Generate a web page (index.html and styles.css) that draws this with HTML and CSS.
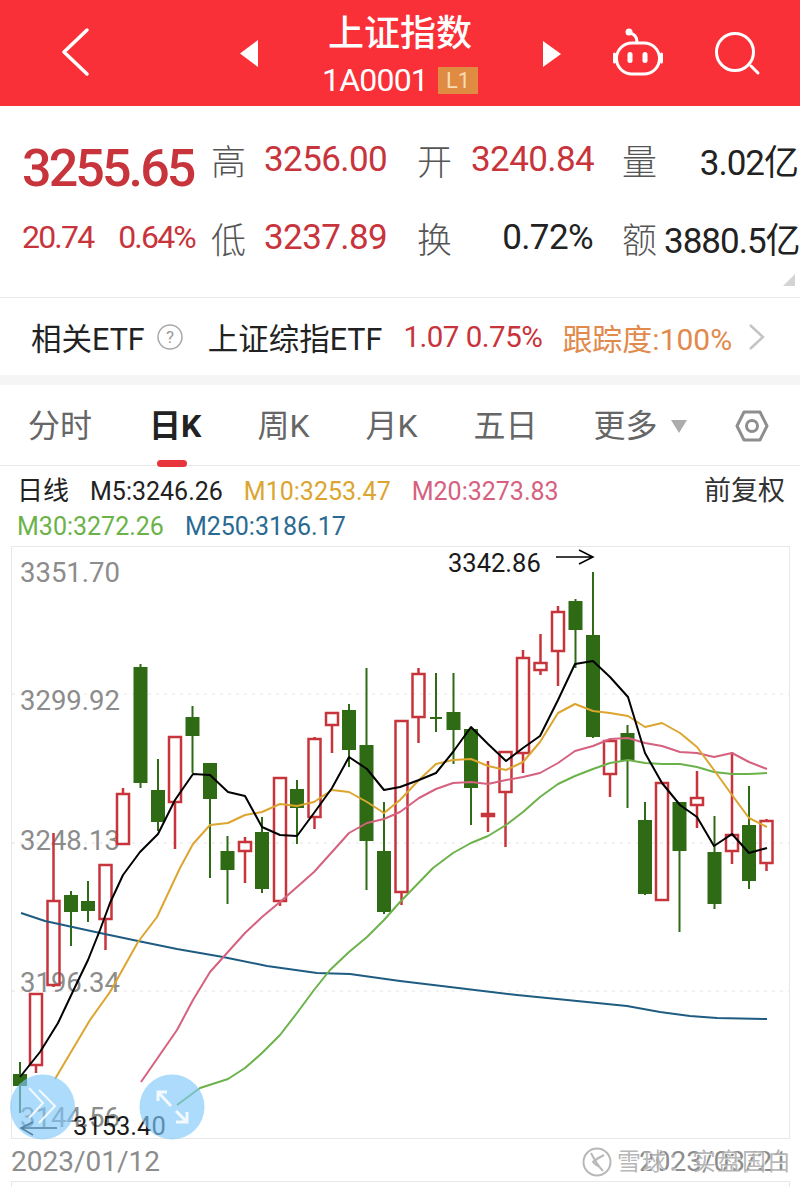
FILE: index.html
```html
<!DOCTYPE html>
<html lang="zh-CN">
<head>
  <meta charset="UTF-8">
  <title>上证指数</title>
  <link rel="stylesheet" href="styles.css">
</head>
<body>
  <header class="topbar">
    <svg class="topbar-icons" viewBox="0 0 800 106" width="800" height="106">
      <path class="icon-line" d="M87 30 64 52 87 74"/>
      <path class="icon-fill" d="M258 40v27l-18-13.500z"/>
      <path class="icon-fill" d="M543 41v26l18-13z"/>
      <!-- robot -->
      <rect class="icon-line robot" x="616.500" y="43" width="43" height="31" rx="15.500"/>
      <path class="icon-line robot" d="M614.500 54v8M661.500 54v8M637 42c0-6-3-8-7-9"/>
      <circle class="icon-fill" cx="629" cy="32" r="3.500"/>
      <rect class="icon-fill" x="627.500" y="52" width="5" height="11" rx="2.500"/>
      <rect class="icon-fill" x="642.500" y="52" width="5" height="11" rx="2.500"/>
      <!-- search -->
      <circle class="icon-line robot" cx="735" cy="52" r="18.500"/>
      <path class="icon-line robot" d="M751 66l7 7"/>
    </svg>
    <div class="title">上证指数</div>
    <div class="subtitle">
      <span class="code">1A0001</span>
      <span class="level">L1</span>
    </div>
  </header>

  <section class="quote">
    <div class="price">3255.65</div>
    <div class="label">高</div>
    <div class="num red">3256.00</div>
    <div class="label">开</div>
    <div class="num red">3240.84</div>
    <div class="label">量</div>
    <div class="num right">3.02亿</div>

    <div class="change"><span>20.74</span><span>0.64%</span></div>
    <div class="label">低</div>
    <div class="num red">3237.89</div>
    <div class="label">换</div>
    <div class="num">0.72%</div>
    <div class="label">额</div>
    <div class="num right">3880.5亿</div>
    <span class="corner"></span>
  </section>

  <section class="etf">
    <span>相关ETF</span>
    <svg class="help" viewBox="0 0 26 26" width="26" height="26">
      <circle cx="13" cy="13" r="12"/>
      <text x="13" y="19" text-anchor="middle">?</text>
    </svg>
    <span class="etf-name">上证综指ETF</span>
    <span class="etf-change">1.07 0.75%</span>
    <span class="etf-track">跟踪度:100%</span>
    <svg class="etf-arrow" viewBox="0 0 16 26" width="16" height="26">
      <path d="M1 1l13 12L1 25"/>
    </svg>
  </section>

  <nav class="tabs">
    <span class="tab">分时</span>
    <span class="tab active">日K</span>
    <span class="tab">周K</span>
    <span class="tab">月K</span>
    <span class="tab">五日</span>
    <span class="tab more">更多</span>
    <svg class="more-arrow" viewBox="0 0 16 13" width="16" height="13"><path d="M0 0h16L8 13z"/></svg>
    <svg class="settings" viewBox="0 0 34 32" width="34" height="32">
      <path d="M9 2h16l7 14-7 14H9L2 16z"/>
      <circle cx="17" cy="16" r="5.500"/>
    </svg>
  </nav>

  <section class="legend">
    <div class="legend-row">
      <span class="legend-name">日线</span>
      <span>M5:3246.26</span>
      <span class="ma10">M10:3253.47</span>
      <span class="ma20">M20:3273.83</span>
      <span class="adjust">前复权</span>
    </div>
    <div class="legend-row">
      <span class="ma30">M30:3272.26</span>
      <span class="ma250">M250:3186.17</span>
    </div>
  </section>

  <svg class="chart" viewBox="0 546 800 594" width="800" height="594">
    <rect class="frame" x="11.500" y="546.500" width="778" height="592"/>
    <path class="grid" d="M12 694H789M12 843H789M12 991H789"/>

    <text class="axis" x="20" y="582">3351.70</text>
    <text class="axis" x="20" y="710">3299.92</text>
    <text class="axis" x="20" y="850">3248.13</text>
    <text class="axis" x="20" y="992">3196.34</text>
    <text class="axis" x="20" y="1127">3144.56</text>

    <path class="candles-up" d="M30 994h12v71h-12zM36 1065V1073
      M53.500 833V901M47.500 901h12v84h-12zM53.500 985V987
      M99.500 865h12v54h-12zM105.500 919V950
      M123 788V794M117 794h12v50h-12z
      M169 737h12v65h-12zM175 802V849
      M245 837V842M239 842h12v9h-12zM245 851V883
      M274 778h12v123h-12zM280 901V906
      M314.500 737V739M308.500 739h12v78h-12zM314.500 817V829
      M326 713h12v12h-12zM332 725V753
      M395.500 721h12v171h-12zM401.500 892V905
      M418.500 668V674M412.500 674h12v43h-12zM418.500 717V743
      M488 761V832M482 814h12v2h-12z
      M505.500 751V752M499.500 752h12v40h-12zM505.500 792V847
      M523 650V658M517 658h12v95h-12zM523 753V773
      M540.500 634V663M534.500 663h12v7h-12zM540.500 670V675
      M558 606V612M552 612h12v39h-12zM558 651V686
      M604 741h12v33h-12zM610 774V797
      M656 783h12v117h-12z
      M697 771V798M691 798h12v7h-12zM697 805V828
      M732 752V835M726 835h12v16h-12zM732 851V864
      M766.500 819V821M760.500 821h12v42h-12zM766.500 863V871"/>

    <path class="candles-down" d="M20 1062V1113M14 1075h12v10h-12z
      M71 891V946M65 896h12v15h-12z
      M88 881V922M82 902h12v8h-12z
      M140.500 664V788M134.500 668h12v114h-12z
      M158 759V831M152 791h12v30h-12z
      M192.500 706V773M186.500 718h12v17h-12z
      M210 764V878M204 764h12v34h-12z
      M227.500 836V904M221.500 852h12v17h-12z
      M262 817V893M256 833h12v55h-12z
      M297 780V844M291 790h12v17h-12z
      M349 704V767M343 711h12v38h-12z
      M366.500 668V890M360.500 746h12v94h-12z
      M384 802V914M378 852h12v59h-12z
      M436 673V732M430 718h12
      M453.500 673V764M447.500 713h12v16h-12z
      M471 730V825M465 730h12v57h-12z
      M575.500 599V668M569.500 602h12v27h-12z
      M593 572V738M587 636h12v100h-12z
      M627.500 725V808M621.500 734h12v26h-12z
      M645 802V895M639 821h12v72h-12z
      M679.500 803V932M673.500 803h12v47h-12z
      M714.500 816V909M708.500 853h12v50h-12z
      M749 786V889M743 826h12v54h-12z"/>

    <polyline class="line line-250" points="21,913 45,921 100,933 138,941 177,949 223,957 267,966 317,973 350,974 400,981 450,987 517,995 577,1001 627,1006 660,1012 690,1016 717,1018 767,1019"/>
    <polyline class="line line-30" points="177,1105 200,1088 228,1079 245,1068 262,1053 280,1035 297,1013 314,990 330,970 349,952 367,937 384,920 400,902 433,868 453,853 471,843 488,836 506,825 523,812 540,797 558,784 575,776 593,769 610,763 628,760 645,763 662,764 680,764 697,767 714,772 732,774 749,774 767,773"/>
    <polyline class="line line-20" points="141,1082 177,1030 193,1000 210,972 227,953 245,933 262,917 280,902 297,887 314,872 332,852 349,833 367,823 384,819 400,812 419,798 436,789 453,783 471,782 488,784 506,780 523,777 540,773 558,763 575,751 593,746 610,739 628,738 645,743 662,746 680,752 697,753 714,757 732,753 749,762 767,769"/>
    <polyline class="line line-10" points="55,1079 90,1020 110,992 138,942 157,917 180,868 193,844 210,825 228,823 245,815 262,812 280,804 297,806 314,802 332,790 349,792 367,802 384,813 400,800 419,780 436,764 453,760 471,759 488,766 506,770 523,762 540,742 558,713 575,704 593,711 610,713 628,716 645,727 662,723 680,733 697,747 714,770 732,795 749,818 767,827"/>
    <polyline class="line line-5" points="20,1077 40,1052 58,1023 75,987 88,960 100,930 110,903 123,875 140,852 158,834 175,800 193,774 210,775 228,792 245,796 262,827 280,835 297,836 314,813 332,788 349,757 367,769 384,790 400,787 419,780 436,773 453,752 471,727 488,744 506,761 523,748 540,736 558,700 575,664 593,661 610,677 628,697 645,753 662,783 680,805 697,817 714,846 732,834 749,853 767,848"/>

    <text class="mark" x="448" y="572">3342.86</text>
    <path class="mark-arrow" d="M556 557H593M579 550l14 7-14 7"/>
    <text class="mark" x="73" y="1135">3153.40</text>
    <path class="mark-arrow" d="M57 1128H21M33 1122l-12 6 12 7"/>

    <circle class="float-btn" cx="42.500" cy="1107" r="32.500"/>
    <path class="float-icon thin" d="M29 1088l14 15-14 15M39 1090l16 16-16 17"/>
    <circle class="float-btn" cx="172" cy="1107" r="32.500"/>
    <path class="float-icon" d="M158 1092l13 14M158 1101v-9h9M187 1122l-11-11M187 1112v10h-11"/>
  </svg>

  <footer class="dates">
    <span>2023/01/12</span>
    <span>2023/03/21</span>
    <div class="watermark">
      <svg viewBox="0 0 30 30" width="30" height="30">
        <circle cx="15" cy="15" r="13.500"/>
        <path d="M9 6c3 6 6 12 12 18M22 8c-4 2-8 4-11 7 2 3 5 4 7 5"/>
      </svg>
      <span>雪球：实盘国白</span>
    </div>
  </footer>
  <div class="next-frame"></div>
</body>
</html>
```

FILE: styles.css
```css
:root {
  --red: #c8343b;
  --head: #fa3038;
  --dark: #222222;
  --gray: #8c8c8c;
  --line: #e8e8e8;
}

html, body {
  margin: 0;
  padding: 0;
  background: #ffffff;
}

body {
  width: 800px;
  height: 1187px;
  overflow: hidden;
  font-family: Roboto, "Noto Sans CJK SC", sans-serif;
  color: var(--dark);
}

/* top bar */
.topbar {
  position: relative;
  height: 106px;
  background: var(--head);
  color: #ffffff;
  text-align: center;
}

.topbar-icons {
  position: absolute;
  left: 0;
  top: 0;
}

.icon-line {
  fill: none;
  stroke: #ffffff;
  stroke-width: 3.500;
  stroke-linecap: round;
  stroke-linejoin: round;
}

.icon-line.robot {
  stroke-width: 3;
}

.icon-fill {
  fill: #ffffff;
}

.title {
  padding-top: 13px;
  font-size: 36px;
  line-height: 42px;
  font-weight: 500;
}

.subtitle {
  display: flex;
  justify-content: center;
  align-items: center;
  gap: 10px;
  margin-top: 10px;
}

.code {
  font-size: 32px;
  line-height: 30px;
  letter-spacing: -0.800px;
}

.level {
  width: 40px;
  height: 27px;
  background: #e08b42;
  color: #f8dcb4;
  font-size: 22px;
  line-height: 27px;
}

/* quote table */
.quote {
  position: relative;
  display: grid;
  grid-template-columns: 189px 53px 153px 54px 151px 42px 134px;
  grid-template-rows: 78px 78px;
  box-sizing: border-box;
  height: 192px;
  padding: 14px 0 0 22px;
  border-bottom: 1px solid var(--line);
  align-items: center;
}

.price {
  padding-top: 19px;
  color: var(--red);
  font-size: 52px;
  font-weight: 500;
  line-height: 50px;
  letter-spacing: -2.900px;
}

.change {
  display: flex;
  justify-content: space-between;
  width: 173px;
  color: var(--red);
  font-size: 32px;
  letter-spacing: -1.800px;
}

.label {
  color: #555555;
  font-size: 35px;
  font-weight: 300;
}

.num {
  width: 122px;
  font-size: 35px;
  letter-spacing: -0.600px;
  text-align: right;
  white-space: nowrap;
}

.num.red {
  color: var(--red);
}

.num.right {
  width: 134px;
  letter-spacing: -1px;
}

.corner {
  position: absolute;
  right: 5px;
  bottom: 11px;
  width: 0;
  height: 0;
  border-left: 12px solid transparent;
  border-bottom: 12px solid #d4d4d4;
}

/* related etf */
.etf {
  display: flex;
  align-items: center;
  box-sizing: border-box;
  height: 77px;
  padding-left: 31px;
  font-size: 30.500px;
  white-space: nowrap;
}

.help {
  margin-left: 12px;
}

.help circle {
  fill: none;
  stroke: #a8a8a8;
  stroke-width: 1.500;
}

.help text {
  fill: #999999;
  font-size: 17px;
}

.etf-name {
  margin-left: 25px;
}

.etf-change {
  margin-left: 21px;
  color: var(--red);
  font-size: 29.500px;
  letter-spacing: -0.500px;
}

.etf-track {
  margin-left: 20px;
  color: #e2894c;
  font-size: 30px;
}

.etf-arrow {
  margin-left: 17px;
}

.etf-arrow path {
  fill: none;
  stroke: #c4c4c4;
  stroke-width: 2.500;
}

/* period tabs */
.tabs {
  display: flex;
  align-items: center;
  gap: 56px;
  box-sizing: border-box;
  height: 91px;
  padding: 2px 0 0 28px;
  border-top: 10px solid #f5f5f5;
  border-bottom: 1px solid var(--line);
  font-size: 32px;
  color: #666666;
}

.tab {
  position: relative;
  line-height: 70px;
}

.tab.active {
  margin-left: 1px;
  color: var(--dark);
  font-weight: 700;
}

.tab.active::after {
  content: "";
  position: absolute;
  left: 8px;
  bottom: -6px;
  width: 30px;
  height: 7px;
  border-radius: 4px;
  background: #e8353c;
}

.more-arrow {
  margin-left: -43px;
}

.more-arrow path {
  fill: #acacac;
}

.settings {
  margin-left: -8px;
}

.settings path,
.settings circle {
  fill: none;
  stroke: #8e8e8e;
  stroke-width: 3;
  stroke-linejoin: round;
}

/* moving average legend */
.legend {
  box-sizing: border-box;
  height: 80px;
  padding: 8px 15px 0 17px;
  font-size: 25px;
  line-height: 35px;
  white-space: nowrap;
}

.legend-row {
  display: flex;
  gap: 21px;
}

.legend-name {
  font-size: 26px;
}

.ma10 { color: #dca52f; }
.ma20 { color: #d5617f; }
.ma30 { color: #6cb24a; }
.ma250 { color: #2a6a92; }

.adjust {
  margin-left: auto;
  font-size: 27px;
  color: #333333;
}

/* chart */
.chart {
  display: block;
}

.frame {
  fill: none;
  stroke: var(--line);
  stroke-width: 1;
}

.grid {
  fill: none;
  stroke: #e4e4e4;
  stroke-width: 1;
  stroke-dasharray: 3 5;
}

.axis {
  fill: var(--gray);
  font-size: 27.500px;
}

.candles-up {
  fill: none;
  stroke: #c8343b;
  stroke-width: 2.500;
}

.candles-down {
  fill: #2f6a14;
  stroke: #2f6a14;
  stroke-width: 2;
}

.line {
  fill: none;
  stroke-width: 2;
  stroke-linejoin: round;
}

.line-5 { stroke: #000000; }
.line-10 { stroke: #dca52f; }
.line-20 { stroke: #d5617f; }
.line-30 { stroke: #6cb24a; }
.line-250 { stroke: #1f5c82; }

.mark {
  fill: #1a1a1a;
  font-size: 25.500px;
}

.mark-arrow {
  fill: none;
  stroke: #000000;
  stroke-width: 1.500;
}

.float-btn {
  fill: rgba(128, 200, 250, 0.65);
}

.float-icon {
  fill: none;
  stroke: rgba(255, 255, 255, 0.85);
  stroke-width: 3;
}

.float-icon.thin {
  stroke-width: 2;
}

/* bottom dates */
.dates {
  position: relative;
  display: flex;
  justify-content: space-between;
  box-sizing: border-box;
  height: 41px;
  padding: 0 12px 0 11px;
  font-size: 28px;
  line-height: 44px;
  color: var(--gray);
}

.watermark {
  position: absolute;
  left: 582px;
  top: 7px;
  display: flex;
  align-items: center;
  gap: 5px;
  color: rgba(170, 170, 170, 0.85);
  font-size: 24px;
  line-height: 30px;
  letter-spacing: 1px;
  text-shadow: 1px 1px 0 rgba(255, 255, 255, 0.8);
}

.watermark svg {
  fill: none;
  stroke: #b8b8b8;
  stroke-width: 2;
}

.next-frame {
  height: 6px;
  margin: 0 10px 0 11px;
  border: 1px solid var(--line);
  border-bottom: none;
}
```
